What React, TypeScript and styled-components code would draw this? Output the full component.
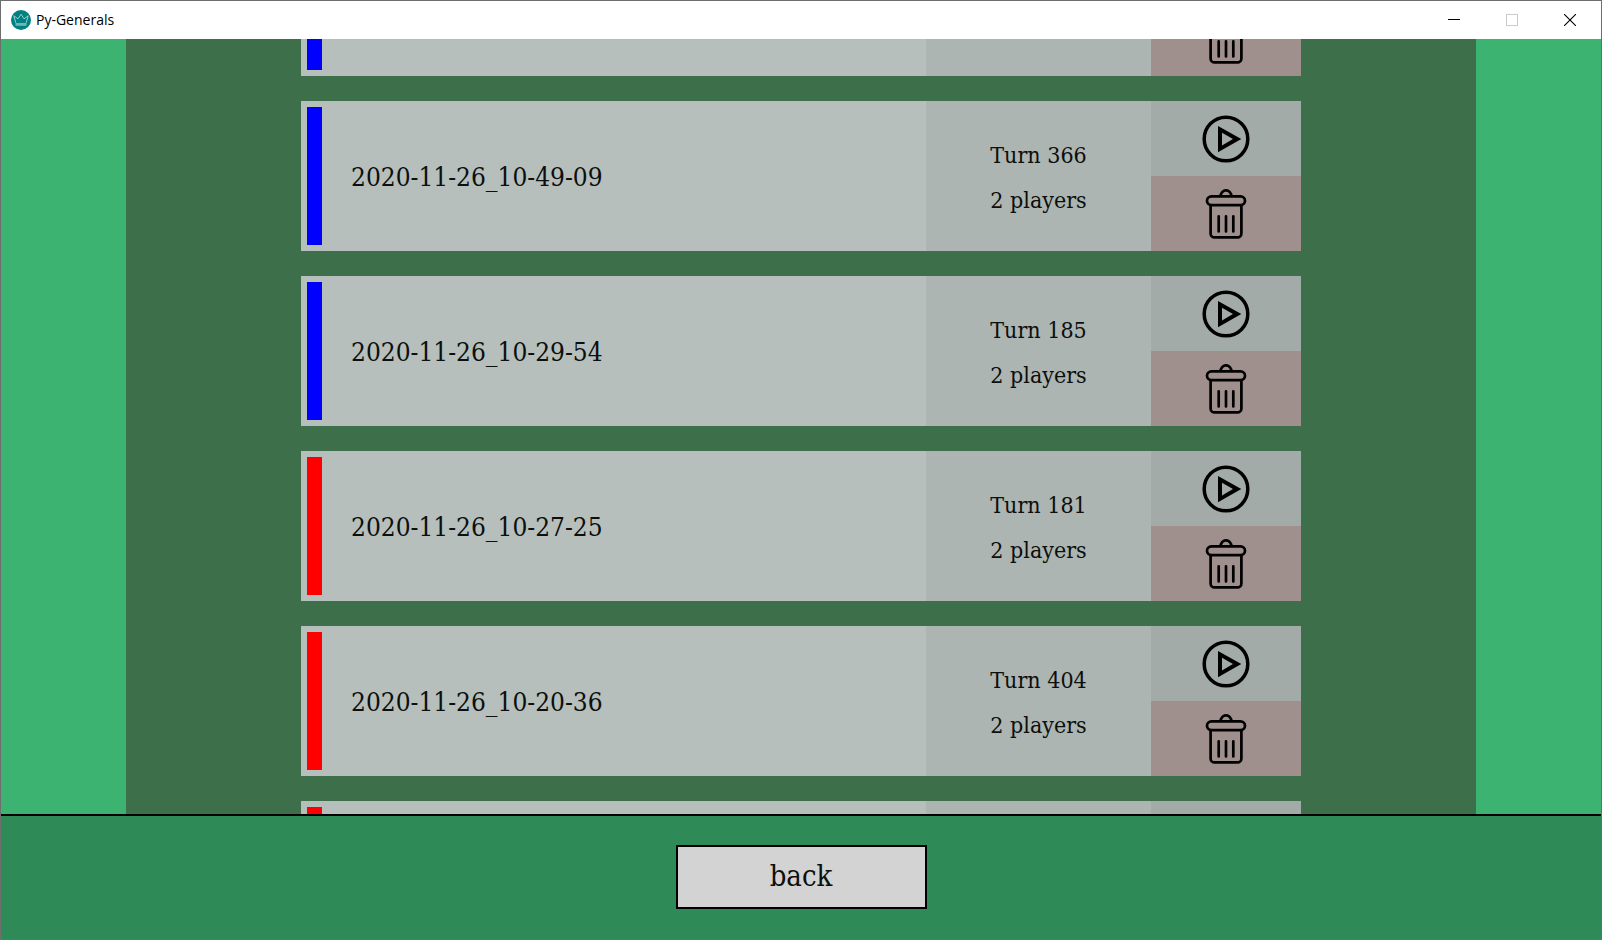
import React, { useLayoutEffect, useRef } from "react";
import styled, { createGlobalStyle } from "styled-components";

const GlobalStyle = createGlobalStyle`
  * { box-sizing: border-box; }
  body { margin: 0; background: #6e6e6e; }
  button { font: inherit; color: inherit; border: 0; padding: 0; cursor: pointer; }
`;

const serif = `"DejaVu Serif Condensed", "DejaVu Serif", serif`;

const Window = styled.div`
  display: flex;
  flex-direction: column;
  height: 100vh;
  border: 1px solid #6e6e6e;
  background: #3cb371;
  color: #0c0f0d;
  font-family: ${serif};
`;

const TitleBar = styled.header`
  display: flex;
  flex: none;
  align-items: center;
  height: 38px;
  padding: 0 2px 0 10px;
  background: #fff;
`;

const Title = styled.h1`
  flex: 1;
  margin: 0 0 0 5px;
  font: 400 14px/20px "Open Sans", "Noto Sans", sans-serif;
  color: #000;
`;

const WindowButton = styled.button`
  display: flex;
  align-items: center;
  justify-content: center;
  width: 58px;
  height: 38px;
  background: #fff;
  color: #000;

  &:disabled { color: #ccc; }
`;

const Stage = styled.main`
  flex: 1;
  min-height: 0;
  padding: 0 125px;
`;

const Panel = styled.ul`
  display: flex;
  flex-direction: column;
  gap: 25px;
  height: 100%;
  margin: 0;
  padding: 0 175px;
  overflow-y: auto;
  scrollbar-width: none;
  list-style: none;
  background: #3d6f4b;
`;

const Card = styled.li`
  display: grid;
  flex: none;
  grid-template-columns: minmax(0, 1fr) 225px 150px;
  height: 150px;
`;

const Name = styled.div`
  display: flex;
  align-items: center;
  gap: 29px;
  padding: 6px;
  background: #b6bfbc;
  font-size: 26px;
  line-height: 32px;
`;

const Label = styled.span`
  padding-top: 2px;
`;

const Winner = styled.span<{ $color: string }>`
  align-self: stretch;
  width: 15px;
  background: ${(p) => p.$color};
`;

const Stats = styled.div`
  display: flex;
  flex-direction: column;
  align-items: center;
  justify-content: center;
  gap: 13px;
  padding-top: 2px;
  background: #acb5b2;
  font-size: 23px;
  line-height: 32px;
`;

const Actions = styled.div`
  display: grid;
  grid-template-rows: 1fr 1fr;
`;

const ActionButton = styled.button<{ $danger?: boolean }>`
  display: flex;
  align-items: center;
  justify-content: center;
  background: ${(p) => (p.$danger ? "#9f908e" : "#a2aba8")};
  color: #000;
`;

const Footer = styled.footer`
  display: flex;
  flex: none;
  align-items: center;
  justify-content: center;
  height: 125px;
  padding-bottom: 1px;
  border-top: 2px solid #000;
  background: #2e8b57;
`;

const BackButton = styled.button`
  && {
    width: 251px;
    height: 64px;
    padding-bottom: 3px;
    border: 2px solid #000;
    background: #d3d3d3;
    font-size: 29px;
    line-height: 40px;
  }
`;

const Logo = () => (
  <svg width="20" height="20" viewBox="0 0 20 20" aria-hidden="true">
    <circle cx="10" cy="10" r="10" fill="#008080" />
    <path d="M4.8 12.8 2.8 5.8 7 8.8 10 4.2 13 8.8 17.2 5.8 15.2 12.8" fill="none" stroke="#a8d6d6" strokeWidth="0.9" />
    <path d="M4.5 13h11v2.8h-11z" fill="#6fb6b6" />
  </svg>
);

const PlayIcon = () => (
  <svg width="50" height="50" viewBox="0 0 50 50" aria-hidden="true">
    <circle cx="25" cy="25" r="21.8" fill="none" stroke="currentColor" strokeWidth="3.5" />
    <path fillRule="evenodd" fill="currentColor" d="M17 12v26.3L40.3 25zM21 18.7 32 25 21 31.6z" />
  </svg>
);

const TrashIcon = () => (
  <svg width="50" height="50" viewBox="0 0 50 50" fill="none" stroke="currentColor" strokeWidth="2.7" aria-hidden="true">
    <path d="M19.6 7.3a5.4 6 0 0 1 10.8 0" />
    <rect x="6" y="7.3" width="38" height="8.8" rx="4.4" />
    <path d="M9.6 16v28.4a4 4 0 0 0 4 4h22.8a4 4 0 0 0 4-4V16" />
    <path strokeLinecap="round" d="M17.7 27.3v15.2M25 27.3v15.2M32.3 27.3v15.2" />
  </svg>
);

interface Replay {
  color: string;
  name?: string;
  turn?: number;
  players?: number;
}

const replays: Replay[] = [
  { color: "#00f" },
  { color: "#00f", name: "2020-11-26_10-49-09", turn: 366, players: 2 },
  { color: "#00f", name: "2020-11-26_10-29-54", turn: 185, players: 2 },
  { color: "#f00", name: "2020-11-26_10-27-25", turn: 181, players: 2 },
  { color: "#f00", name: "2020-11-26_10-20-36", turn: 404, players: 2 },
  { color: "#f00" },
];

const START_SCROLL = 113;

export default function App() {
  const panel = useRef<HTMLUListElement>(null);

  useLayoutEffect(() => {
    if (panel.current) panel.current.scrollTop = START_SCROLL;
  }, []);

  return (
    <>
      <GlobalStyle />
      <Window>
        <TitleBar>
          <Logo />
          <Title>Py-Generals</Title>
          <WindowButton aria-label="Minimize">
            <svg width="12" height="12" stroke="currentColor" shapeRendering="crispEdges">
              <path d="M0 5.5h12" />
            </svg>
          </WindowButton>
          <WindowButton aria-label="Maximize" disabled>
            <svg width="12" height="12" fill="none" stroke="currentColor" shapeRendering="crispEdges">
              <rect x="0.5" y="0.5" width="11" height="11" />
            </svg>
          </WindowButton>
          <WindowButton aria-label="Close">
            <svg width="12" height="12" stroke="currentColor" strokeWidth="1.1">
              <path d="M0 0l12 12M12 0 0 12" />
            </svg>
          </WindowButton>
        </TitleBar>
        <Stage>
          <Panel ref={panel}>
            {replays.map((replay, i) => (
              <Card key={i}>
                <Name>
                  <Winner $color={replay.color} />
                  {replay.name && <Label>{replay.name}</Label>}
                </Name>
                <Stats>
                  {replay.turn && <span>Turn {replay.turn}</span>}
                  {replay.players && <span>{replay.players} players</span>}
                </Stats>
                <Actions>
                  <ActionButton aria-label="Play">
                    <PlayIcon />
                  </ActionButton>
                  <ActionButton aria-label="Delete" $danger>
                    <TrashIcon />
                  </ActionButton>
                </Actions>
              </Card>
            ))}
          </Panel>
        </Stage>
        <Footer>
          <BackButton>back</BackButton>
        </Footer>
      </Window>
    </>
  );
}
